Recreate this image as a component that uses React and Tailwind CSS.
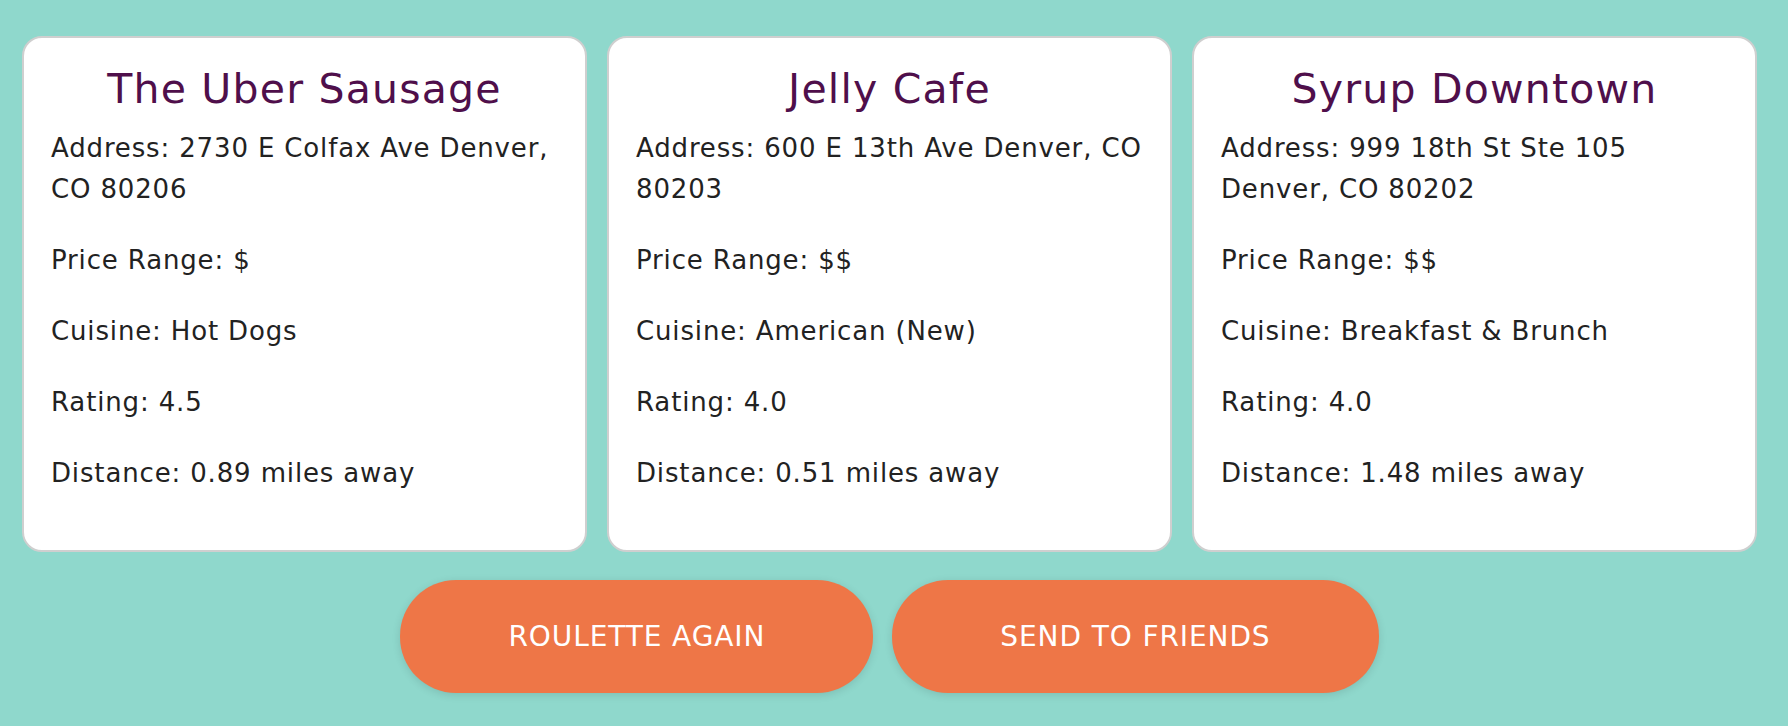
import React from 'react';

const restaurants = [
    {
        name: 'The Uber Sausage',
        address: ['Address: 2730 E Colfax Ave Denver,', 'CO 80206'],
        price: '$',
        cuisine: 'Hot Dogs',
        rating: '4.5',
        distance: '0.89',
    },
    {
        name: 'Jelly Cafe',
        address: ['Address: 600 E 13th Ave Denver, CO', '80203'],
        price: '$$',
        cuisine: 'American (New)',
        rating: '4.0',
        distance: '0.51',
    },
    {
        name: 'Syrup Downtown',
        address: ['Address: 999 18th St Ste 105', 'Denver, CO 80202'],
        price: '$$',
        cuisine: 'Breakfast & Brunch',
        rating: '4.0',
        distance: '1.48',
    },
];

const RestaurantCard = ({ restaurant }) => (
    <div className="h-[516px] bg-white border-2 border-[#cfcfcf] rounded-[20px] px-[27px] pt-[28px]">
        <h2 className="text-center text-[#4f0f4b] text-[41px] leading-[46px] tracking-[1.2px] mb-[16px] whitespace-nowrap">
            {restaurant.name}
        </h2>
        <div className="flex flex-col gap-[30px] text-[#222222] text-[26px] leading-[41px] tracking-[0.85px]">
            <p>
                {restaurant.address.map((line) => (
                    <span key={line} className="block whitespace-nowrap">{line}</span>
                ))}
            </p>
            <p>Price Range: {restaurant.price}</p>
            <p>Cuisine: {restaurant.cuisine}</p>
            <p>Rating: {restaurant.rating}</p>
            <p>Distance: {restaurant.distance} miles away</p>
        </div>
    </div>
);

export default function App() {
    return (
        <div
            className="w-full h-[726px] bg-[#8fd8cc] pt-[36px] pl-[22px] pr-[31px] overflow-hidden"
            style={{ fontFamily: '"DejaVu Sans", sans-serif' }}
        >
            <div className="grid grid-cols-3 gap-[20px]">
                {restaurants.map((r) => (
                    <RestaurantCard key={r.name} restaurant={r} />
                ))}
            </div>

            {/* Action buttons */}
            <div className="flex justify-center gap-[19px] mt-[28px]">
                <button className="h-[113px] px-[108px] rounded-[56px] bg-[#ee7647] text-white text-[28px] tracking-[0.9px] uppercase shadow-[0_2px_8px_rgba(0,0,0,0.12)]">
                    Roulette Again
                </button>
                <button className="h-[113px] px-[108px] rounded-[56px] bg-[#ee7647] text-white text-[28px] tracking-[0.9px] uppercase shadow-[0_2px_8px_rgba(0,0,0,0.12)]">
                    Send to Friends
                </button>
            </div>
        </div>
    );
}
